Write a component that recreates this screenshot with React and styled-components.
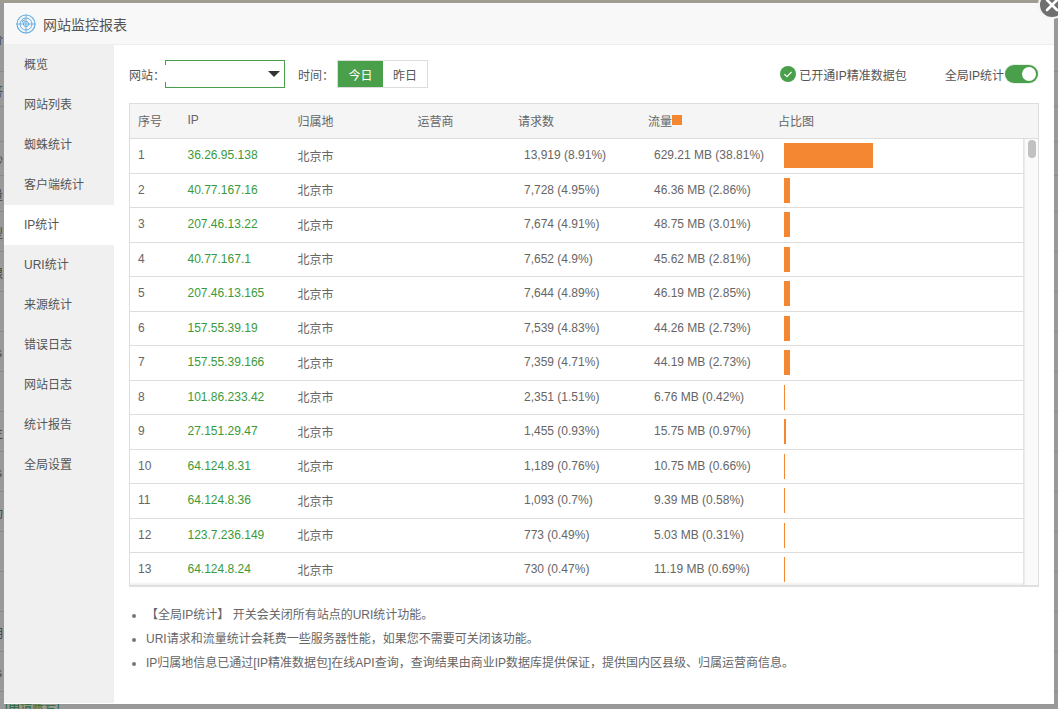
import React from "react";
import styled, { createGlobalStyle } from "styled-components";

const Global = createGlobalStyle`
  html, body { margin: 0; padding: 0; height: 100%; overflow: hidden; background: #999; }
  * { box-sizing: border-box; }
  body { font-family: "Liberation Sans", "Noto Sans CJK SC", sans-serif; font-size: 12px; color: #666; }
`;

const Page = styled.div`
  height: 709px;
  background: #999;
  border-top: 3px solid #a19c92;
  overflow: hidden;
`;
const BackRow = styled.div`
  height: ${(p) => p.$h}px;
  border-bottom: 1px solid #8a8a8a;
  display: flex;
  align-items: center;
  padding-top: 2px;
  margin-left: ${(p) => p.$off}px;
  font-size: 12px;
  color: #444;
  white-space: nowrap;
`;
const BackLink = styled.div`
  padding: 6px 0 0 5px;
  font-size: 12px;
  line-height: 18px;
  color: #2a6b2c;
  white-space: nowrap;
`;

const Modal = styled.div`
  position: fixed;
  left: 4px;
  top: 3px;
  width: 1050px;
  height: 701px;
  background: #fff;
  display: flex;
  flex-direction: column;
`;
const Close = styled.div`
  position: absolute;
  right: -12px;
  top: -12px;
  width: 28px;
  height: 28px;
  border-radius: 50%;
  background: #6f6f6f;
  border: 2px solid #f4f4f4;
  display: flex;
  align-items: center;
  justify-content: center;
`;
const Header = styled.header`
  height: 42px;
  flex: none;
  background: #f8f8f8;
  border-bottom: 1px solid #eee;
  display: flex;
  align-items: center;
  padding-left: 12px;
  gap: 7px;
`;
const Title = styled.h1`
  margin: 0;
  font-size: 14px;
  font-weight: 400;
  color: #555;
`;
const Body = styled.div`
  flex: 1;
  display: flex;
  min-height: 0;
`;
const Side = styled.nav`
  width: 110px;
  flex: none;
  background: #f0f0f0;
  margin-bottom: 1px;
`;
const MenuItem = styled.div`
  height: 40px;
  line-height: 40px;
  padding-left: 20px;
  font-size: 12px;
  color: #555;
  background: ${(p) => (p.$active ? "#fff" : "transparent")};
`;
const Main = styled.main`
  flex: 1;
  min-width: 0;
  padding: 15px 15px 0 15px;
`;
const Toolbar = styled.div`
  height: 28px;
  display: flex;
  align-items: center;
`;
const Label = styled.span`
  font-size: 12px;
  color: #555;
  white-space: nowrap;
`;
const Select = styled.div`
  position: relative;
  width: 120px;
  height: 28px;
  margin-right: 13px;
  border: 1px solid #4a9f4b;
  background: #fff;
  &::before {
    content: "";
    position: absolute;
    left: -1px;
    top: 4px;
    height: 17px;
    width: 1px;
    background: #fff;
  }
  &::after {
    content: "";
    position: absolute;
    right: 4px;
    top: 10px;
    border-style: solid;
    border-width: 6px 6px 0 6px;
    border-color: #333 transparent transparent transparent;
  }
`;
const Seg = styled.div`
  display: flex;
  margin-left: 3px;
  height: 28px;
  border: 1px solid #ddd;
`;
const SegBtn = styled.div`
  width: ${(p) => p.$w}px;
  display: flex;
  align-items: center;
  justify-content: center;
  font-size: 12px;
  background: ${(p) => (p.$on ? "#4a9f4b" : "#fff")};
  color: ${(p) => (p.$on ? "#fff" : "#555")};
`;
const Spacer = styled.div`
  flex: 1;
`;
const Status = styled.div`
  display: flex;
  align-items: center;
  gap: 3px;
  margin-right: 38px;
  font-size: 12px;
  color: #555;
`;
const Global2 = styled.div`
  display: flex;
  align-items: center;
  gap: 1px;
  font-size: 12px;
  color: #555;
  margin-right: 1px;
`;
const Toggle = styled.div`
  width: 33px;
  height: 18px;
  border-radius: 9px;
  background: #4a9f4b;
  box-shadow: 0 0 0 1px #e6f0e6;
  display: flex;
  align-items: center;
  justify-content: flex-end;
  padding-right: 2px;
  &::after {
    content: "";
    width: 14px;
    height: 14px;
    border-radius: 50%;
    background: #fff;
  }
`;
const Table = styled.div`
  position: relative;
  margin-top: 15px;
  width: 910px;
  height: 484px;
  border: 1px solid #ddd;
  border-bottom: 2px solid #e0e0e0;
  overflow: hidden;
`;
const cols = "49.5px 110px 120px 100.5px 130px 130px 1fr";
const HeadRow = styled.div`
  display: grid;
  grid-template-columns: ${cols};
  height: 35px;
  align-items: center;
  background: #f5f5f5;
  border-bottom: 1px solid #ddd;
  padding-bottom: 2px;
`;
const HeadCell = styled.div`
  padding-left: 8px;
  font-size: 12px;
  color: #666;
  white-space: nowrap;
  display: flex;
  align-items: center;
`;
const SortMark = styled.i`
  width: 10px;
  height: 10px;
  background: #f48731;
  display: block;
`;
const Rows = styled.div`
  position: relative;
  height: 447px;
  overflow: hidden;
  &::after {
    content: "";
    position: absolute;
    left: 0;
    right: 0;
    bottom: 0;
    height: 4px;
    background: linear-gradient(to bottom, rgba(220,220,220,0), rgba(220,220,220,0.7));
  }
`;
const Row = styled.div`
  display: grid;
  grid-template-columns: ${cols};
  width: 894px;
  height: 34.5px;
  align-items: center;
  border-bottom: 1px solid #ddd;
  border-right: 1px solid #e4e4e4;
`;
const Cell = styled.div`
  padding-left: ${(p) => (p.$num ? 14 : 8)}px;
  padding-bottom: 1px;
  font-size: 12px;
  color: ${(p) => (p.$ip ? "#3a9a3a" : "#666")};
  white-space: nowrap;
`;
const BarCell = styled.div`
  padding-left: 14px;
  height: 25px;
`;
const Bar = styled.div`
  height: 25px;
  background: #f48731;
`;
const Track = styled.div`
  position: absolute;
  right: 0;
  top: 35px;
  bottom: 0;
  width: 14px;
  background: #fafafa;
  border-left: 1px solid #ececec;
`;
const Thumb = styled.div`
  position: absolute;
  left: 3px;
  top: 1px;
  width: 8px;
  height: 18px;
  border-radius: 4px;
  background: #c1c1c1;
`;
const Notes = styled.ul`
  margin: 15.5px 0 0;
  padding: 0 0 0 17px;
  font-size: 12px;
  line-height: 24px;
  color: #666;
  li::marker { color: #777; font-size: 12px; }
`;

const data = [
  ["36.26.95.138", "13,919 (8.91%)", "629.21 MB (38.81%)", 89],
  ["40.77.167.16", "7,728 (4.95%)", "46.36 MB (2.86%)", 6],
  ["207.46.13.22", "7,674 (4.91%)", "48.75 MB (3.01%)", 6],
  ["40.77.167.1", "7,652 (4.9%)", "45.62 MB (2.81%)", 6],
  ["207.46.13.165", "7,644 (4.89%)", "46.19 MB (2.85%)", 6],
  ["157.55.39.19", "7,539 (4.83%)", "44.26 MB (2.73%)", 6],
  ["157.55.39.166", "7,359 (4.71%)", "44.19 MB (2.73%)", 6],
  ["101.86.233.42", "2,351 (1.51%)", "6.76 MB (0.42%)", 1],
  ["27.151.29.47", "1,455 (0.93%)", "15.75 MB (0.97%)", 2],
  ["64.124.8.31", "1,189 (0.76%)", "10.75 MB (0.66%)", 1],
  ["64.124.8.36", "1,093 (0.7%)", "9.39 MB (0.58%)", 1],
  ["123.7.236.149", "773 (0.49%)", "5.03 MB (0.31%)", 1],
  ["64.124.8.24", "730 (0.47%)", "11.19 MB (0.69%)", 1],
];
const menu = ["概览", "网站列表", "蜘蛛统计", "客户端统计", "IP统计", "URI统计", "来源统计", "错误日志", "网站日志", "统计报告", "全局设置"];
const back = [
  [69, "价"], [35, "答"], [35, ""], [34, "秒"], [36, "量"], [40, "型"], [40, "限"], [40, ""], [40, "s"], [40, ""],
  [40, "生"], [40, "s"], [40, "功"], [40, ""], [40, ""], [40, "期"], [40, "s"],
];

const Logo = () => (
  <svg width="20" height="20" viewBox="0 0 20 20" fill="none" stroke="#62ade3">
    <circle cx="10" cy="10" r="9" strokeWidth="1.2" />
    <circle cx="10" cy="10" r="6" strokeWidth="1" />
    <circle cx="10" cy="10" r="2.6" strokeWidth="1" />
    <path d="M10 0.5V19.5M0.5 10H19.5" strokeWidth="0.9" />
    <path d="M6 8.4A4.4 4.4 0 0 1 9 5.8" stroke="#6f9cc0" strokeWidth="1.1" />
  </svg>
);

export default function App() {
  return (
    <>
      <Global />
      <Page>
        {back.map(([h, t], i) => (
          <BackRow key={i} $h={h} $off={t === "s" ? -4 : -9}>{t}</BackRow>
        ))}
        <BackLink>[申请账号]</BackLink>
      </Page>
      <Modal>
        <Close>
          <svg width="16" height="16" viewBox="0 0 16 16" stroke="#fff" strokeWidth="2.6" strokeLinecap="round">
            <path d="M3 3L13 13M13 3L3 13" />
          </svg>
        </Close>
        <Header>
          <Logo />
          <Title>网站监控报表</Title>
        </Header>
        <Body>
          <Side>
            {menu.map((m) => (
              <MenuItem key={m} $active={m === "IP统计"}>{m}</MenuItem>
            ))}
          </Side>
          <Main>
            <Toolbar>
              <Label>网站：</Label>
              <Select />
              <Label>时间：</Label>
              <Seg>
                <SegBtn $on $w={45}>今日</SegBtn>
                <SegBtn $w={44}>昨日</SegBtn>
              </Seg>
              <Spacer />
              <Status>
                <svg width="16" height="16" viewBox="0 0 16 16">
                  <circle cx="8" cy="8" r="8" fill="#4a9f4b" />
                  <path d="M4.4 8.2L7 10.6L11.6 5.8" fill="none" stroke="#fff" strokeWidth="1.2" />
                </svg>
                已开通IP精准数据包
              </Status>
              <Global2>
                全局IP统计
                <Toggle />
              </Global2>
            </Toolbar>
            <Table>
              <HeadRow>
                <HeadCell>序号</HeadCell>
                <HeadCell>IP</HeadCell>
                <HeadCell>归属地</HeadCell>
                <HeadCell>运营商</HeadCell>
                <HeadCell>请求数</HeadCell>
                <HeadCell>流量<SortMark /></HeadCell>
                <HeadCell>占比图</HeadCell>
              </HeadRow>
              <Rows>
                {data.map((d, i) => (
                  <Row key={d[0]}>
                    <Cell>{i + 1}</Cell>
                    <Cell $ip>{d[0]}</Cell>
                    <Cell>北京市</Cell>
                    <Cell />
                    <Cell $num>{d[1]}</Cell>
                    <Cell $num>{d[2]}</Cell>
                    <BarCell><Bar style={{ width: d[3] }} /></BarCell>
                  </Row>
                ))}
              </Rows>
              <Track><Thumb /></Track>
            </Table>
            <Notes>
              <li>【全局IP统计】 开关会关闭所有站点的URI统计功能。</li>
              <li>URI请求和流量统计会耗费一些服务器性能，如果您不需要可关闭该功能。</li>
              <li>IP归属地信息已通过[IP精准数据包]在线API查询，查询结果由商业IP数据库提供保证，提供国内区县级、归属运营商信息。</li>
            </Notes>
          </Main>
        </Body>
      </Modal>
    </>
  );
}
